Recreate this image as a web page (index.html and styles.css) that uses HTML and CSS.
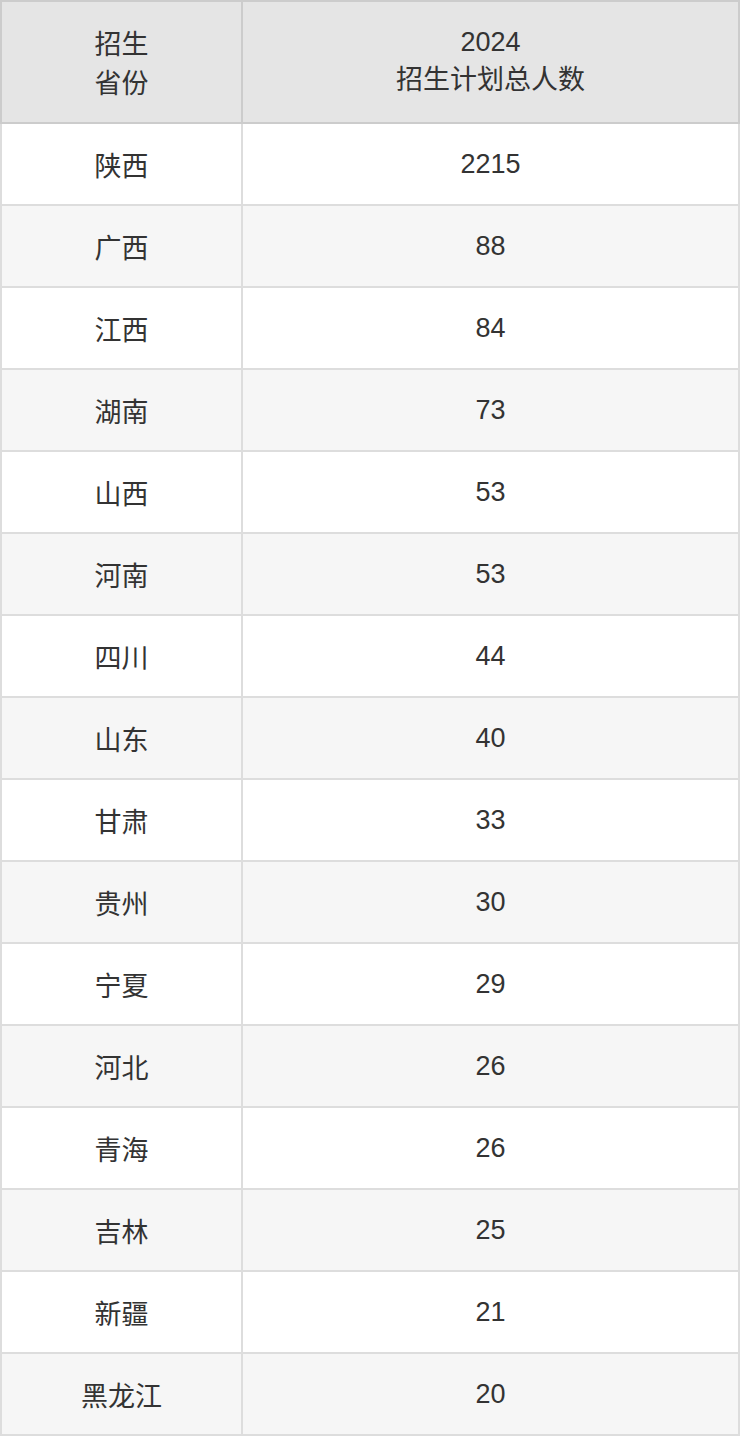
FILE: index.html
```html
<!DOCTYPE html>
<html lang="zh">
<head>
<meta charset="utf-8">
<title>招生计划</title>
<link rel="stylesheet" href="styles.css">
</head>
<body>
<table class="plan">
  <colgroup>
    <col class="col-prov">
    <col class="col-num">
  </colgroup>
  <thead>
    <tr class="head-row">
      <th>招生<br>省份</th>
      <th>2024<br>招生计划总人数</th>
    </tr>
  </thead>
  <tbody>
    <tr><td>陕西</td><td>2215</td></tr>
    <tr><td>广西</td><td>88</td></tr>
    <tr><td>江西</td><td>84</td></tr>
    <tr><td>湖南</td><td>73</td></tr>
    <tr><td>山西</td><td>53</td></tr>
    <tr><td>河南</td><td>53</td></tr>
    <tr><td>四川</td><td>44</td></tr>
    <tr><td>山东</td><td>40</td></tr>
    <tr><td>甘肃</td><td>33</td></tr>
    <tr><td>贵州</td><td>30</td></tr>
    <tr><td>宁夏</td><td>29</td></tr>
    <tr><td>河北</td><td>26</td></tr>
    <tr><td>青海</td><td>26</td></tr>
    <tr><td>吉林</td><td>25</td></tr>
    <tr><td>新疆</td><td>21</td></tr>
    <tr><td>黑龙江</td><td>20</td></tr>
  </tbody>
</table>
</body>
</html>
```

FILE: styles.css
```css
html, body {
  margin: 0;
  padding: 0;
  background: #ffffff;
}

.plan {
  width: 740px;
  border-collapse: collapse;
  table-layout: fixed;
  font-family: "Liberation Sans", "Noto Sans CJK SC", sans-serif;
  font-size: 27px;
  color: #333333;
}

.col-prov {
  width: 241px;
}

.plan th,
.plan td {
  border: 2px solid #dddddd;
  text-align: center;
  vertical-align: middle;
  padding: 0;
  font-weight: normal;
}

.plan th {
  background: #e5e5e5;
  border-color: #cccccc;
}

.head-row {
  height: 122px;
}

.plan tbody tr {
  height: 82px;
}

.plan tbody tr:nth-child(even) td {
  background: #f6f6f6;
}
```
